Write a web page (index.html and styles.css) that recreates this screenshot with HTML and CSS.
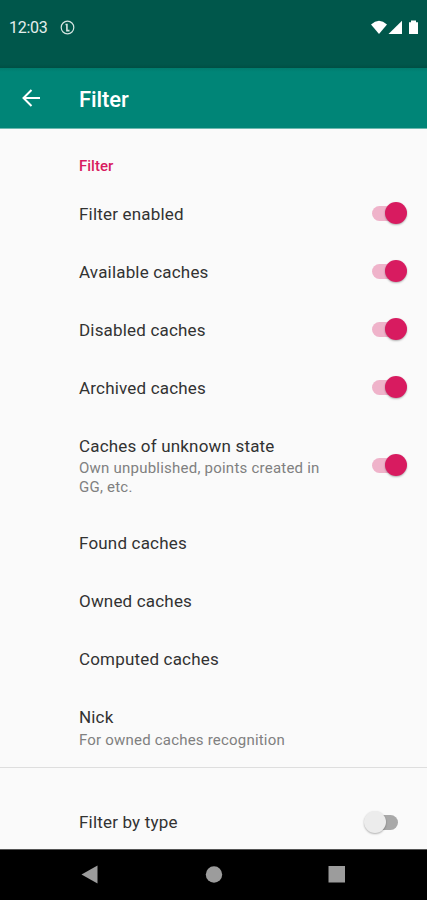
FILE: index.html
```html
<!DOCTYPE html>
<html lang="en">
<head>
<meta charset="utf-8">
<title>Filter</title>
<link rel="stylesheet" href="styles.css">
</head>
<body>
<div class="screen">
  <div class="status">
    <span class="clock">12:03</span>
    <svg class="notice" width="15" height="15" viewBox="0 0 15 15" fill="none" stroke="currentColor"><circle cx="7.500" cy="7.500" r="6.300" stroke-width="1.200"/><path d="M5.500 4.500h1.500M6.900 3.800v6.800h2.600" stroke-width="1.600"/></svg>
    <svg class="signals" width="50" height="16" viewBox="0 0 50 16" fill="currentColor"><path d="M0 4.400Q8 -3 16 4.400L8 14Z"/><path d="M31 .800V14H17.500Z"/><path d="M38 2.300h2V.500h5v1.800h2V14h-9Z"/></svg>
  </div>
  <header class="appbar">
    <svg class="back" width="20" height="20" viewBox="0 0 20 20" fill="none" stroke="currentColor" stroke-width="2"><path d="M19 10H2.500M10.500 2L2.500 10l8 8"/></svg>
    <h1>Filter</h1>
  </header>
  <main>
    <h2>Filter</h2>
    <div class="row"><div class="label">Filter enabled</div><span class="switch on"></span></div>
    <div class="row"><div class="label">Available caches</div><span class="switch on"></span></div>
    <div class="row"><div class="label">Disabled caches</div><span class="switch on"></span></div>
    <div class="row"><div class="label">Archived caches</div><span class="switch on"></span></div>
    <div class="row three-line"><div class="label">Caches of unknown state<p>Own unpublished, points created in<br>GG, etc.</p></div><span class="switch on"></span></div>
    <div class="row"><div class="label">Found caches</div></div>
    <div class="row"><div class="label">Owned caches</div></div>
    <div class="row"><div class="label">Computed caches</div></div>
    <div class="row two-line"><div class="label">Nick<p>For owned caches recognition</p></div></div>
    <section><div class="row"><div class="label">Filter by type</div><span class="switch"></span></div></section>
  </main>
  <nav>
    <svg width="427" height="50" viewBox="0 0 427 50" fill="#9c9c9c"><path d="M81.500 24.500L97.500 15.500v18Z"/><circle cx="214" cy="24.500" r="8.200"/><path d="M328.500 16h16.500v16.500h-16.500Z"/></svg>
  </nav>
</div>
</body>
</html>
```
FILE: styles.css
```css
* { box-sizing: border-box; }
body { margin: 0; font-family: Roboto, sans-serif; background: #fafafa; }
h1, h2, p { margin: 0; }
svg { display: block; flex: none; }
.screen { width: 427px; height: 900px; display: flex; flex-direction: column; overflow: hidden; }
.status { height: 68px; flex: none; background: linear-gradient(#00574b 64px, #004f44); color: #fff; display: flex; align-items: flex-start; padding: 18px 6px 0 9px; }
.clock { width: 51px; font-size: 16px; line-height: 20px; color: #e3eeec; letter-spacing: -.3px; }
.notice { margin-top: 2px; color: #d5e5e2; }
.signals { margin: 2px 0 0 auto; }
.appbar { height: 61px; flex: none; background: linear-gradient(#007c6d, #008577 4px); color: #fff; display: flex; align-items: center; padding: 0 0 0 21px; border-bottom: 1px solid #6db8af; }
h1 { margin-left: 38px; font-size: 22px; line-height: 28px; font-weight: 500; padding-top: 4px; letter-spacing: -.1px; }
main { flex: 1; min-height: 0; overflow: hidden; }
h2 { height: 56px; padding: 27px 0 0 79px; color: #d81b60; font-size: 15px; line-height: 20px; font-weight: 500; }
.row { height: 58px; display: flex; align-items: center; justify-content: space-between; padding: 0 20px 0 79px; }
.label { font-size: 17px; line-height: 22px; color: #323232; letter-spacing: .18px; white-space: nowrap; }
.label p { font-size: 15px; line-height: 19px; color: #808080; letter-spacing: .2px; padding-top: 3px; }
.three-line { height: 97px; }
.three-line .label { margin-top: 0; }
.three-line p { padding-top: 2px; letter-spacing: .23px; }
.two-line { height: 79px; }
.two-line .label { margin-top: 1px; }
section { border-top: 1px solid #dedede; padding-top: 25px; }
.switch { position: relative; width: 35px; height: 22px; flex: none; }
.switch::before { content: ""; position: absolute; left: 8px; top: 3px; width: 26px; height: 15px; border-radius: 8px; background: #a9a9a9; }
.switch::after { content: ""; position: absolute; left: 0; top: -1px; width: 22px; height: 22px; border-radius: 50%; background: #ececec; box-shadow: 0 1px 2px rgba(0, 0, 0, .3); }
.switch.on::before { left: 0; background: #efb3ca; }
.switch.on::after { left: 13px; background: #d81b60; }
section .switch { margin: 2px 8px 0 0; }
nav { height: 51px; flex: none; background: #000; border-top: 1px solid #555; }
```
